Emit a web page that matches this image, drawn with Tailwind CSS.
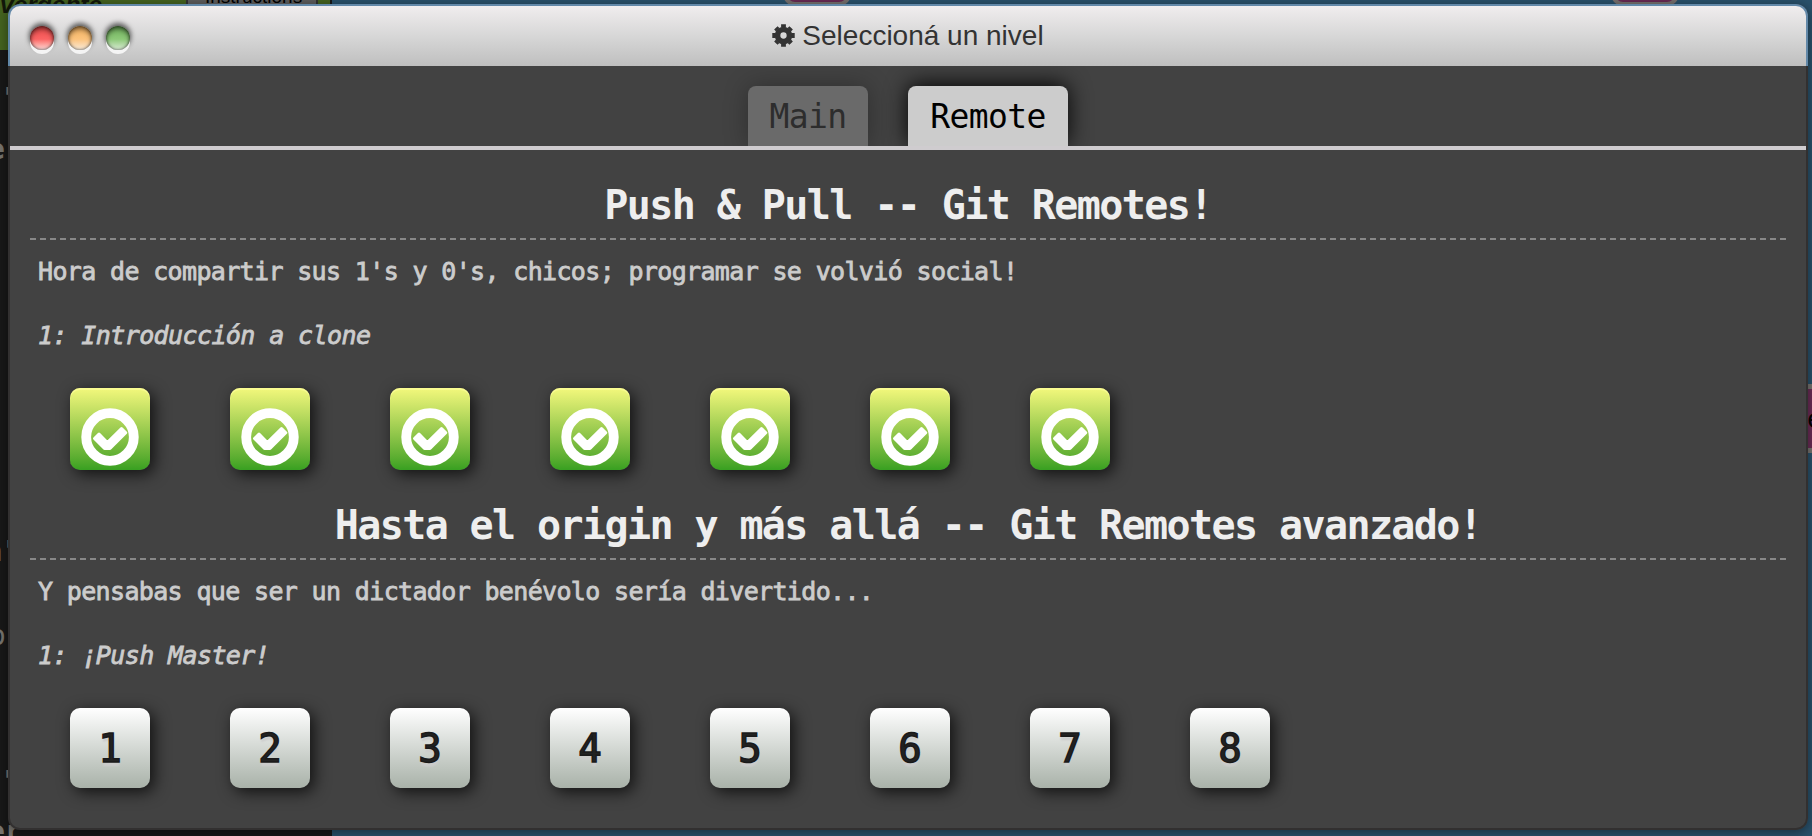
<!DOCTYPE html>
<html lang="es">
<head>
<meta charset="utf-8">
<title>Seleccioná un nivel</title>
<script src="https://cdn.jsdelivr.net/npm/@tailwindcss/browser@4"></script>
</head>
<body class="relative h-[836px] w-[1812px] overflow-hidden bg-[#29516b] font-['DejaVu_Sans_Mono',monospace]">
<svg width="0" height="0" class="absolute">
  <symbol id="ok" viewBox="0 0 58 58">
    <circle cx="29" cy="29" r="23.8" fill="none" stroke="#fff" stroke-width="9.800"/>
    <path d="M13.500 30.500L18 26L26.300 34.500L40.500 20.500L44.800 24.800L29 40.500H23.500Z" fill="#fff" stroke="#fff" stroke-width="3" stroke-linejoin="round"/>
  </symbol>
</svg>

<!-- page behind the window -->
<div class="absolute left-0 top-0 h-[836px] w-[332px] overflow-hidden bg-[#181818] text-[28px] leading-8 text-[#77746e]">
  <div class="absolute left-0 top-0 h-[50px] w-[330px] bg-[#456420]"></div>
  <div class="absolute left-0 top-[-11px] font-['Liberation_Sans',sans-serif] text-[24.500px] leading-8 font-bold italic text-[#12180a]">vergente</div>
  <div class="absolute left-[186px] top-[-4px] h-10 w-[132px] border-2 border-[#333] bg-[#5e5e5e]"></div>
  <div class="absolute left-[205px] top-[-15px] font-['Liberation_Sans',sans-serif] text-[19px] leading-6 text-black">Instructions</div>
  <div class="absolute left-[-15px] top-[83px]">."</div>
  <div class="absolute left-[-12px] top-[134px] font-bold">e</div>
  <div class="absolute left-[-14px] top-[536px]">n"</div>
  <div class="absolute left-[-11px] top-[620px]">o</div>
  <div class="absolute left-[-15px] top-[766px]">."</div>
  <div class="absolute left-[-12px] top-[816px] font-bold">er</div>
</div>
<div class="absolute left-[783px] top-[-54px] h-[60px] w-[68px] rounded-[12px] border-4 border-[#77716f] bg-[#692a54]"></div>
<div class="absolute left-[1611px] top-[-54px] h-[60px] w-[68px] rounded-[12px] border-4 border-[#77716f] bg-[#692a54]"></div>
<div class="absolute left-[1800px] top-[384px] h-[69px] w-6 border-y-[5px] border-[#77736f] bg-[#6b2c56]"></div>
<div class="absolute left-[1807px] top-[403px] text-[26px] leading-8 text-black">e</div>

<!-- level window -->
<main class="relative ml-2 mt-1 h-[826px] w-[1800px] rounded-[12px] shadow-[0_2px_12px_rgba(0,0,0,0.45)]">
  <div class="flex h-full flex-col overflow-hidden rounded-[12px] bg-[#323030]">
    <header class="h-[62px] shrink-0 bg-[#6288a8] px-0.5 pt-0.5">
      <div class="grid h-[60px] grid-cols-[1fr_auto_1fr] items-center rounded-t-[10px] bg-linear-to-b from-[#f0edee] via-[#d7d7d7] via-50% to-[#bfbfbf] px-5">
        <div class="flex gap-[14px] pt-1">
          <i class="size-6 rounded-full bg-linear-to-b from-[#e94a4a] via-[#fb6464] via-55% to-[#f8dcdc] shadow-[inset_0_3px_5px_rgba(0,0,0,0.5),inset_0_0_3px_rgba(0,0,0,0.6),0_4px_0_#f4f4f4,0_-2px_5px_1px_rgba(0,0,0,0.6)]"></i>
          <i class="size-6 rounded-full bg-linear-to-b from-[#f0b060] via-[#fcc37c] via-55% to-[#f8ecdc] shadow-[inset_0_3px_5px_rgba(0,0,0,0.5),inset_0_0_3px_rgba(0,0,0,0.6),0_4px_0_#f4f4f4,0_-2px_5px_1px_rgba(0,0,0,0.6)]"></i>
          <i class="size-6 rounded-full bg-linear-to-b from-[#70b05c] via-[#8dc978] via-55% to-[#dcecd8] shadow-[inset_0_3px_5px_rgba(0,0,0,0.5),inset_0_0_3px_rgba(0,0,0,0.6),0_4px_0_#f4f4f4,0_-2px_5px_1px_rgba(0,0,0,0.6)]"></i>
        </div>
        <h1 class="flex items-center gap-[7px] font-['Liberation_Sans',sans-serif] text-[28px] leading-8 text-[#333]">
          <svg class="size-[23px] -translate-y-px" viewBox="-12 -12 24 24" fill="none" stroke="#333">
            <circle r="6.200" stroke-width="5.800"/>
            <path d="M0 -11.700V-8M0 11.700V8M-11.700 0H-8M11.700 0H8M-8 -8L-6 -6M8 8L6 6M-8 8L-6 6M8 -8L6 -6" stroke-width="5"/>
          </svg>
          <span>Seleccioná un nivel</span>
        </h1>
        <span></span>
      </div>
    </header>
    <div class="mx-0.5 mb-0.5 flex-1 overflow-hidden rounded-b-[10px] bg-[#424242]">
      <nav class="flex h-[84px] items-end justify-center gap-10 overflow-hidden border-b-4 border-[#cfcccf] text-[33px] leading-[62px] tracking-[-0.600px]">
        <div class="h-[60px] w-[120px] rounded-t-[8px] bg-[#6a6a6a] text-center text-[#2d2d2d] shadow-[0_0_24px_rgba(0,0,0,0.3)]">Main</div>
        <div class="h-[60px] w-[160px] rounded-t-[8px] bg-[#ccc] text-center text-black shadow-[0_-2px_22px_rgba(0,0,0,0.95)]">Remote</div>
      </nav>

      <section class="h-[320px] px-5 pt-7">
        <h2 class="h-[62px] border-b-2 border-dashed border-[#888] text-center text-[40px] leading-[54px] font-bold tracking-[-1.580px] text-[#eee]">Push &amp; Pull -- Git Remotes!</h2>
        <p class="mt-4 pl-2 text-[25px] leading-8 tracking-[-0.650px] text-[#ccc] [-webkit-text-stroke:0.8px_#ccc]">Hora de compartir sus 1's y 0's, chicos; programar se volvió social!</p>
        <p class="mt-8 pl-2 text-[25px] leading-8 tracking-[-0.600px] text-[#ccc] italic [-webkit-text-stroke:0.8px_#ccc]">1: Introducción a clone</p>
        <div class="mt-9 flex gap-20 pl-10">
          <div class="flex h-[82px] w-20 items-end justify-center rounded-[10px] bg-linear-to-b from-[#f3f87c] to-[#37a021] pb-1 shadow-[inset_0_2px_0_rgba(255,255,160,0.6),4px_4px_16px_rgba(0,0,0,0.75)]"><svg class="size-[58px]"><use href="#ok"/></svg></div>
          <div class="flex h-[82px] w-20 items-end justify-center rounded-[10px] bg-linear-to-b from-[#f3f87c] to-[#37a021] pb-1 shadow-[inset_0_2px_0_rgba(255,255,160,0.6),4px_4px_16px_rgba(0,0,0,0.75)]"><svg class="size-[58px]"><use href="#ok"/></svg></div>
          <div class="flex h-[82px] w-20 items-end justify-center rounded-[10px] bg-linear-to-b from-[#f3f87c] to-[#37a021] pb-1 shadow-[inset_0_2px_0_rgba(255,255,160,0.6),4px_4px_16px_rgba(0,0,0,0.75)]"><svg class="size-[58px]"><use href="#ok"/></svg></div>
          <div class="flex h-[82px] w-20 items-end justify-center rounded-[10px] bg-linear-to-b from-[#f3f87c] to-[#37a021] pb-1 shadow-[inset_0_2px_0_rgba(255,255,160,0.6),4px_4px_16px_rgba(0,0,0,0.75)]"><svg class="size-[58px]"><use href="#ok"/></svg></div>
          <div class="flex h-[82px] w-20 items-end justify-center rounded-[10px] bg-linear-to-b from-[#f3f87c] to-[#37a021] pb-1 shadow-[inset_0_2px_0_rgba(255,255,160,0.6),4px_4px_16px_rgba(0,0,0,0.75)]"><svg class="size-[58px]"><use href="#ok"/></svg></div>
          <div class="flex h-[82px] w-20 items-end justify-center rounded-[10px] bg-linear-to-b from-[#f3f87c] to-[#37a021] pb-1 shadow-[inset_0_2px_0_rgba(255,255,160,0.6),4px_4px_16px_rgba(0,0,0,0.75)]"><svg class="size-[58px]"><use href="#ok"/></svg></div>
          <div class="flex h-[82px] w-20 items-end justify-center rounded-[10px] bg-linear-to-b from-[#f3f87c] to-[#37a021] pb-1 shadow-[inset_0_2px_0_rgba(255,255,160,0.6),4px_4px_16px_rgba(0,0,0,0.75)]"><svg class="size-[58px]"><use href="#ok"/></svg></div>
        </div>
      </section>

      <section class="h-[320px] px-5 pt-7">
        <h2 class="h-[62px] border-b-2 border-dashed border-[#888] text-center text-[40px] leading-[54px] font-bold tracking-[-1.600px] text-[#eee]">Hasta el origin y más allá -- Git Remotes avanzado!</h2>
        <p class="mt-4 pl-2 text-[25px] leading-8 tracking-[-0.650px] text-[#ccc] [-webkit-text-stroke:0.8px_#ccc]">Y pensabas que ser un dictador benévolo sería divertido...</p>
        <p class="mt-8 pl-2 text-[25px] leading-8 tracking-[-0.600px] text-[#ccc] italic [-webkit-text-stroke:0.8px_#ccc]">1: ¡Push Master!</p>
        <div class="mt-9 flex gap-20 pl-10 text-center text-[39px] leading-[82px] text-[#222] [-webkit-text-stroke:1.5px_#1a1a1a] [text-shadow:0_4px_2px_#ccc]">
          <div class="size-20 rounded-[10px] bg-linear-to-b from-white to-[#a9b2a9] shadow-[4px_4px_16px_rgba(0,0,0,0.75)]">1</div>
          <div class="size-20 rounded-[10px] bg-linear-to-b from-white to-[#a9b2a9] shadow-[4px_4px_16px_rgba(0,0,0,0.75)]">2</div>
          <div class="size-20 rounded-[10px] bg-linear-to-b from-white to-[#a9b2a9] shadow-[4px_4px_16px_rgba(0,0,0,0.75)]">3</div>
          <div class="size-20 rounded-[10px] bg-linear-to-b from-white to-[#a9b2a9] shadow-[4px_4px_16px_rgba(0,0,0,0.75)]">4</div>
          <div class="size-20 rounded-[10px] bg-linear-to-b from-white to-[#a9b2a9] shadow-[4px_4px_16px_rgba(0,0,0,0.75)]">5</div>
          <div class="size-20 rounded-[10px] bg-linear-to-b from-white to-[#a9b2a9] shadow-[4px_4px_16px_rgba(0,0,0,0.75)]">6</div>
          <div class="size-20 rounded-[10px] bg-linear-to-b from-white to-[#a9b2a9] shadow-[4px_4px_16px_rgba(0,0,0,0.75)]">7</div>
          <div class="size-20 rounded-[10px] bg-linear-to-b from-white to-[#a9b2a9] shadow-[4px_4px_16px_rgba(0,0,0,0.75)]">8</div>
        </div>
      </section>
    </div>
  </div>
</main>
</body>
</html>
